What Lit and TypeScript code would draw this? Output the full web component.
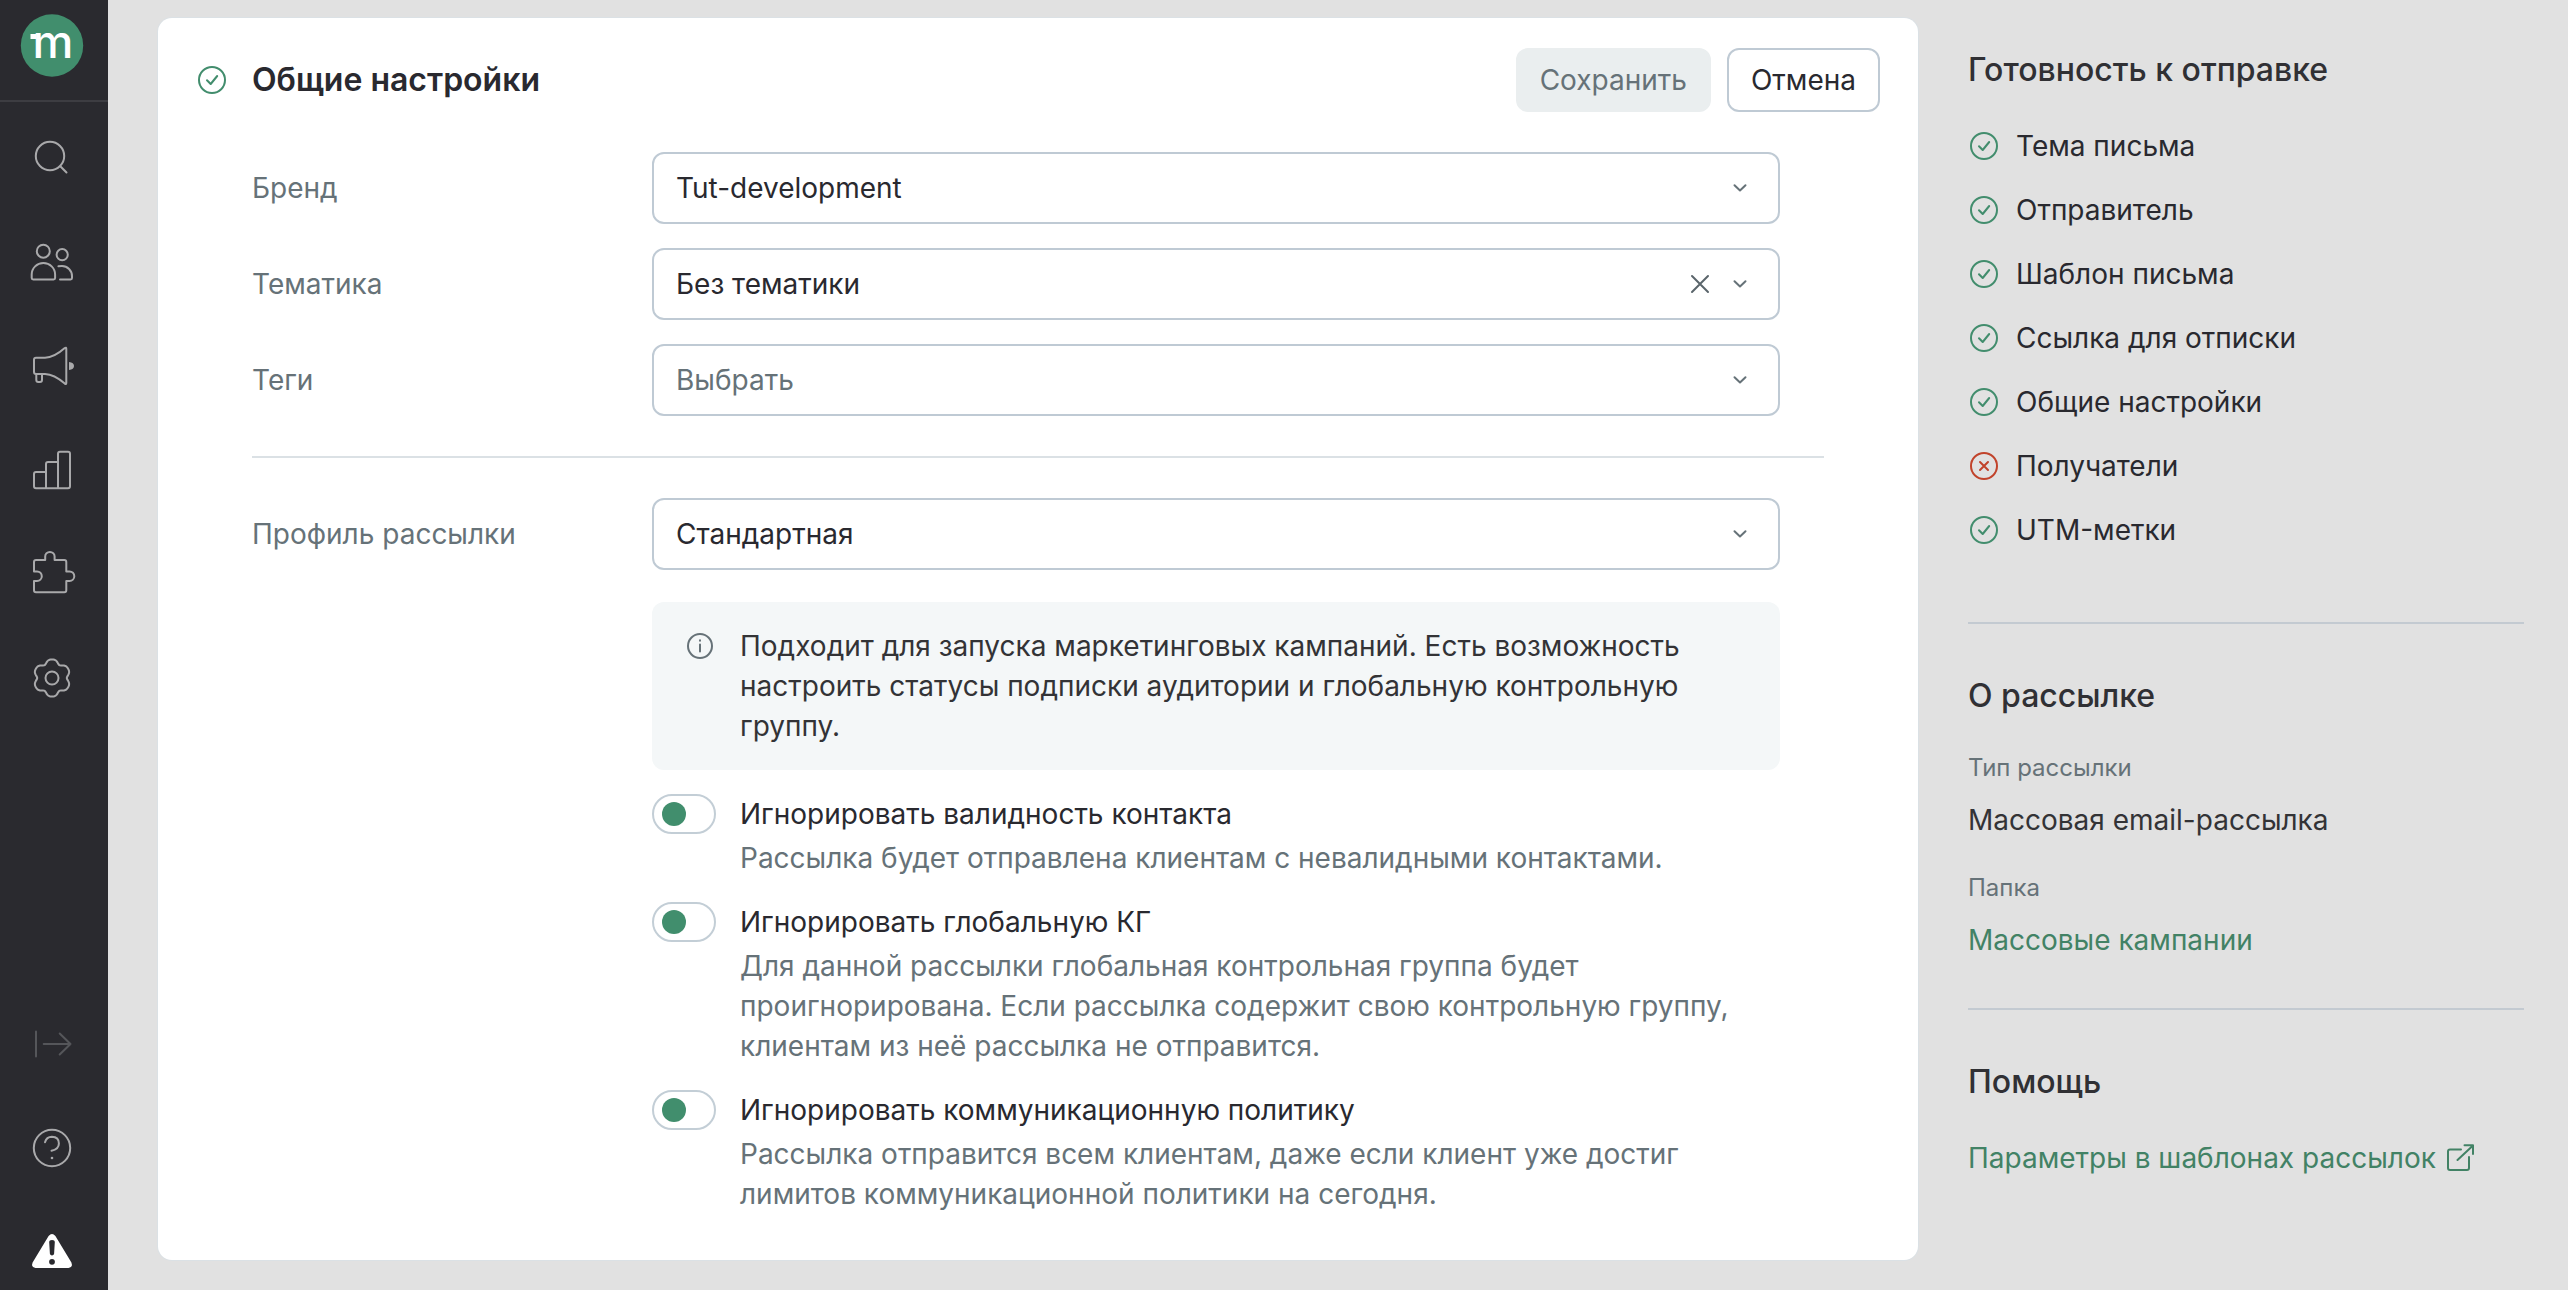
import { LitElement, html, css, svg, nothing } from "lit";
import { customElement, state } from "lit/decorators.js";

/** Closed outline of the six-lobed settings gear, centred in a 48×48 box. */
const gearOutline = (() => {
  const points: string[] = [];
  for (let deg = 0; deg < 360; deg += 4) {
    const a = (deg * Math.PI) / 180;
    const r = 17.1 + 1.9 * Math.cos(6 * a) - 0.4 * Math.cos(12 * a);
    points.push(`${(24 + r * Math.sin(a)).toFixed(2)} ${(24 - r * Math.cos(a)).toFixed(2)}`);
  }
  return `M${points.join("L")}Z`;
})();

const art = {
  search: svg`<circle cx="22" cy="22" r="14.2"/><path d="M32.300 32.300L38.500 38.500"/>`,
  people: svg`<circle cx="15.3" cy="13.2" r="6.5"/><circle cx="34.2" cy="16.700" r="5.600"/>
    <path d="M3.700 36.500a11.700 11.500 0 0 1 23.400 0V40q0 1.400-1.500 1.400H5.200q-1.500 0-1.500-1.400z"/>
    <path d="M30.400 28.300Q32 28 34 28A10 10 0 0 1 44 38v2q0 1.400-1.400 1.400H32"/>`,
  megaphone: svg`<path d="M8 15.800h9Q26 15.500 36.800 6q1.500-1 1.500.700v34.300q0 1.700-1.500.600Q26 32.200 17 32H8q-2 0-2-2V17.800q0-2 2-2z"/>
    <path d="M8.300 32v6q0 2 2 2h1.700q2 0 2-2v-6"/><path class="solid" d="M41 20q5 .500 5 4t-5 4z"/>`,
  chart: svg`<path d="M18 26H8q-2 0-2 2v12.200q0 2 2 2h32q2 0 2-2V7.700q0-2-2-2h-8q-2 0-2 2v34.500M30 16H20q-2 0-2 2v24.200"/>`,
  puzzle: svg`<path d="M8 10h9.200V6.600a4.700 4.700 0 0 1 9.400 0V10h9.700q2 0 2 2v9.400h3.200a4.800 4.800 0 0 1 0 9.600h-3.200v9.200q0 2-2 2H8q-2 0-2-2V31h3a4.800 4.800 0 0 0 0-9.600H6V12q0-2 2-2z"/>`,
  gear: svg`<path d=${gearOutline}/><circle cx="24" cy="24" r="6.500"/>`,
  expand: svg`<path d="M8 11.500v25M15.700 24H42.500M31.700 13.500L42.500 24 31.700 34.500"/>`,
  help: svg`<circle cx="24" cy="24" r="18.200"/><path d="M17 18.300q1.500-5.600 6.900-5.600 7 .300 7 6.700 0 5.600-7.400 7.400"/><circle class="solid" cx="24" cy="34" r="1.300"/>`,
  warning: svg`<path class="solid" fill-rule="evenodd" d="M20.600 8q3.400-4 6.800 0l16 26.500q1.800 4.700-2.900 5.500h-33q-4.700-.800-2.900-5.500zM21.200 14.300q0-2.300 2.800-2.300t2.800 2.300l-.700 11.500q-.300 1.700-2.100 1.700t-2.100-1.700zM24 30.900a2.900 2.900 0 1 0 0 5.800 2.900 2.900 0 1 0 0-5.800z"/>`,
};

const upperNav = [
  { label: "Поиск", icon: art.search, tone: "" },
  { label: "Клиенты", icon: art.people, tone: "" },
  { label: "Кампании", icon: art.megaphone, tone: "" },
  { label: "Отчёты", icon: art.chart, tone: "" },
  { label: "Интеграции", icon: art.puzzle, tone: "" },
  { label: "Настройки", icon: art.gear, tone: "" },
];

const lowerNav = [
  { label: "Развернуть меню", icon: art.expand, tone: "dim" },
  { label: "Справка", icon: art.help, tone: "" },
  { label: "Предупреждения", icon: art.warning, tone: "bright" },
];

const statusIcon = (ok: boolean) => html`
  <svg class="status ${ok ? "ok" : "fail"}" viewBox="0 0 28 28" role="img" aria-label=${ok ? "Готово" : "Не готово"}>
    <circle cx="14" cy="14" r="13" />
    <path d=${ok ? "M9 14.200l3.700 3.800 6.500-8" : "M10 10l8 8M18 10l-8 8"} />
  </svg>`;

const checklist = [
  { text: "Тема письма", ok: true },
  { text: "Отправитель", ok: true },
  { text: "Шаблон письма", ok: true },
  { text: "Ссылка для отписки", ok: true },
  { text: "Общие настройки", ok: true },
  { text: "Получатели", ok: false },
  { text: "UTM-метки", ok: true },
];

const switches = [
  {
    id: "ignore-validity",
    title: "Игнорировать валидность контакта",
    text: "Рассылка будет отправлена клиентам с невалидными контактами.",
  },
  {
    id: "ignore-control",
    title: "Игнорировать глобальную КГ",
    text: "Для данной рассылки глобальная контрольная группа будет проигнорирована. Если рассылка содержит свою контрольную группу, клиентам из неё рассылка не отправится.",
  },
  {
    id: "ignore-policy",
    title: "Игнорировать коммуникационную политику",
    text: "Рассылка отправится всем клиентам, даже если клиент уже достиг лимитов коммуникационной политики на сегодня.",
  },
];

@customElement("app-root")
export class AppRoot extends LitElement {
  static styles = css`
    :host {
      display: block;
      font-family: Inter, "Liberation Sans", sans-serif;
      font-size: 28px;
      line-height: 40px;
      color: #29292f;
      background: #e1e1e1;
    }
    * { box-sizing: border-box; margin: 0; padding: 0; }
    svg { display: block; fill: none; stroke-linecap: round; stroke-linejoin: round; }
    button, select { font: inherit; color: inherit; background: none; }
    a { color: #428265; text-decoration: none; }
    h1, h2 { font-size: 32px; line-height: 40px; }
    h1 { font-weight: 600; }
    h2 { font-weight: 500; color: #303034; }

    .page { display: flex; min-height: 100vh; }

    .rail {
      flex: none;
      width: 108px;
      display: flex;
      flex-direction: column;
      background: #2a2a2f;
    }
    .brand {
      height: 102px;
      padding: 14px 0 0 20px;
      border-bottom: 2px solid #3d3d42;
    }
    .logo { width: 64px; height: 64px; }
    .logo circle { fill: #418e6d; }
    .logo rect { fill: #fff; }
    .logo text { fill: #fff; font-size: 46px; font-weight: 500; text-anchor: middle; }
    .menu {
      display: flex;
      flex-direction: column;
      gap: 56px;
      padding: 32px 0 0 28px;
    }
    .menu.lower { margin-top: auto; padding: 0 0 14px 28px; }
    .menu-link { width: 48px; height: 48px; color: #a9a9ab; }
    .menu-link.dim { color: #55565a; }
    .menu-link.bright { color: #fff; }
    .menu-link svg { width: 48px; height: 48px; stroke: currentColor; stroke-width: 2; }
    .menu-link .solid { fill: currentColor; stroke: none; }

    .content {
      flex: 1;
      min-width: 0;
      display: grid;
      grid-template-columns: minmax(0, 1fr) 556px;
      gap: 50px;
      align-items: start;
      padding: 18px 44px 30px 50px;
    }
    .card {
      background: #fff;
      border-radius: 14px;
      box-shadow: 0 0 0 1px #dbe1e5;
      padding: 30px 0 46px;
    }
    .card-head { display: flex; align-items: center; gap: 26px; padding: 0 38px 0 40px; }
    .card-head h1 { flex: 1; }
    .actions { display: flex; gap: 16px; }
    .btn {
      height: 64px;
      padding: 0 22px;
      border: 2px solid #bfcad4;
      border-radius: 12px;
    }
    .btn:disabled { background: #eaeeef; border-color: #eaeeef; color: #667278; }

    .status { flex: none; width: 28px; height: 28px; stroke-width: 2; }
    .status.ok { stroke: #428d6d; }
    .status.fail { stroke: #c1432b; }

    .form { padding: 40px 94px 0; }
    .rows { display: flex; flex-direction: column; gap: 24px; }
    .row {
      display: grid;
      grid-template-columns: 400px minmax(0, 1fr);
      align-items: center;
      padding-right: 44px;
    }
    .row > label { color: #667278; }
    .split { height: 2px; border: 0; background: #dbe1e5; margin: 40px 0; }
    .field { position: relative; }
    .field select {
      display: block;
      width: 100%;
      height: 72px;
      padding: 0 104px 0 22px;
      border: 2px solid #bfcad4;
      border-radius: 12px;
      appearance: none;
      background: #fff;
    }
    .field select.empty { color: #667278; }
    .tools {
      position: absolute;
      inset: 0 24px 0 auto;
      display: flex;
      align-items: center;
      pointer-events: none;
      stroke: #667278;
    }
    .chevron { width: 32px; height: 32px; stroke-width: 2; }
    .clear {
      display: block;
      width: 32px;
      height: 32px;
      margin-right: 8px;
      border: 0;
      pointer-events: auto;
    }
    .clear svg { width: 32px; height: 32px; stroke: #5a656b; stroke-width: 2; }

    .details {
      display: flex;
      flex-direction: column;
      gap: 24px;
      padding: 32px 44px 0 400px;
    }
    .note {
      display: grid;
      grid-template-columns: 54px 1fr;
      padding: 24px 40px 24px 34px;
      border-radius: 12px;
      background: #f4f7f8;
      color: #333336;
    }
    .note svg { width: 28px; height: 40px; stroke: #667278; stroke-width: 2; }
    .switch {
      display: grid;
      grid-template-columns: 64px 1fr;
      column-gap: 24px;
      row-gap: 4px;
      padding-right: 40px;
    }
    .switch input {
      appearance: none;
      width: 64px;
      height: 40px;
      padding: 6px 8px;
      border: 2px solid #c3ced6;
      border-radius: 20px;
      background: #fff;
    }
    .switch input::before {
      content: "";
      display: block;
      width: 24px;
      height: 24px;
      border-radius: 50%;
      background: #418e6d;
    }
    .switch input:checked::before { margin-left: auto; }
    .switch p { grid-column: 2; color: #667278; }

    .side { padding-top: 32px; }
    .side hr { height: 2px; border: 0; background: #c3cad1; margin: 48px 0 52px; }
    .side .after-list { margin-top: 72px; }
    .checklist { list-style: none; display: flex; flex-direction: column; gap: 24px; margin-top: 36px; }
    .checklist li { display: flex; align-items: center; gap: 18px; padding-left: 2px; }
    .facts { margin-top: 36px; color: #333336; }
    .facts dt { font-size: 24px; line-height: 32px; color: #667278; margin-bottom: 16px; }
    .facts dd + dt { margin-top: 32px; }
    .help-link { display: inline-flex; align-items: center; gap: 10px; margin-top: 36px; }
    .help-link svg { width: 28px; height: 28px; stroke: currentColor; stroke-width: 2; }
  `;

  @state() private topic = "Без тематики";

  private menuLink(item: { label: string; icon: unknown; tone: string }) {
    return html`<a class="menu-link ${item.tone}" href="#" aria-label=${item.label}>
      <svg viewBox="0 0 48 48" aria-hidden="true">${item.icon}</svg>
    </a>`;
  }

  private field(id: string, label: string, value: string, onClear?: () => void) {
    return html`<div class="row">
      <label for=${id}>${label}</label>
      <div class="field">
        <select id=${id} class=${value ? "" : "empty"}>
          <option>${value || "Выбрать"}</option>
        </select>
        <div class="tools">
          ${onClear
            ? html`<button class="clear" type="button" aria-label="Очистить" @click=${onClear}>
                <svg viewBox="0 0 32 32" aria-hidden="true"><path d="M8 8l16 16M24 8L8 24" /></svg>
              </button>`
            : nothing}
          <svg class="chevron" viewBox="0 0 32 32" aria-hidden="true"><path d="M10.500 13.200l5.500 5.300 5.500-5.300" /></svg>
        </div>
      </div>
    </div>`;
  }

  render() {
    return html`<div class="page">
      <nav class="rail" aria-label="Главное меню">
        <div class="brand">
          <svg class="logo" viewBox="0 0 64 64" role="img" aria-label="Логотип">
            <circle cx="32" cy="31.500" r="31.200" />
            <rect x="10.500" y="20" width="6" height="5" />
            <text x="33" y="44">m</text>
          </svg>
        </div>
        <div class="menu">${upperNav.map(this.menuLink)}</div>
        <div class="menu lower">${lowerNav.map(this.menuLink)}</div>
      </nav>

      <div class="content">
        <main class="card">
          <header class="card-head">
            ${statusIcon(true)}
            <h1>Общие настройки</h1>
            <div class="actions">
              <button class="btn" type="button" disabled>Сохранить</button>
              <button class="btn" type="button">Отмена</button>
            </div>
          </header>
          <form class="form">
            <div class="rows">
              ${this.field("brand", "Бренд", "Tut-development")}
              ${this.field("topic", "Тематика", this.topic, this.topic ? () => (this.topic = "") : undefined)}
              ${this.field("tags", "Теги", "")}
            </div>
            <hr class="split" />
            ${this.field("profile", "Профиль рассылки", "Стандартная")}
            <div class="details">
              <div class="note">
                <svg viewBox="0 0 28 40" aria-hidden="true">
                  <circle cx="14" cy="20" r="12" />
                  <path d="M14 18.500v7M14 14.300v.400" />
                </svg>
                <p>Подходит для запуска маркетинговых кампаний. Есть возможность настроить статусы подписки аудитории и глобальную контрольную группу.</p>
              </div>
              ${switches.map(
                (s) => html`<div class="switch">
                  <input type="checkbox" role="switch" id=${s.id} aria-describedby="${s.id}-text" />
                  <label for=${s.id}>${s.title}</label>
                  <p id="${s.id}-text">${s.text}</p>
                </div>`
              )}
            </div>
          </form>
        </main>

        <aside class="side">
          <h2>Готовность к отправке</h2>
          <ul class="checklist">
            ${checklist.map((c) => html`<li>${statusIcon(c.ok)}<span>${c.text}</span></li>`)}
          </ul>
          <hr class="after-list" />
          <h2>О рассылке</h2>
          <dl class="facts">
            <dt>Тип рассылки</dt>
            <dd>Массовая email-рассылка</dd>
            <dt>Папка</dt>
            <dd><a href="#">Массовые кампании</a></dd>
          </dl>
          <hr />
          <h2>Помощь</h2>
          <a class="help-link" href="#">Параметры в шаблонах рассылок
            <svg viewBox="0 0 28 28" aria-hidden="true">
              <path d="M15 5.500H4q-2 0-2 2V24q0 2 2 2h17q2 0 2-2V13M11.500 16L27 1.500M18.500 1.300H27V10" />
            </svg>
          </a>
        </aside>
      </div>
    </div>`;
  }
}
